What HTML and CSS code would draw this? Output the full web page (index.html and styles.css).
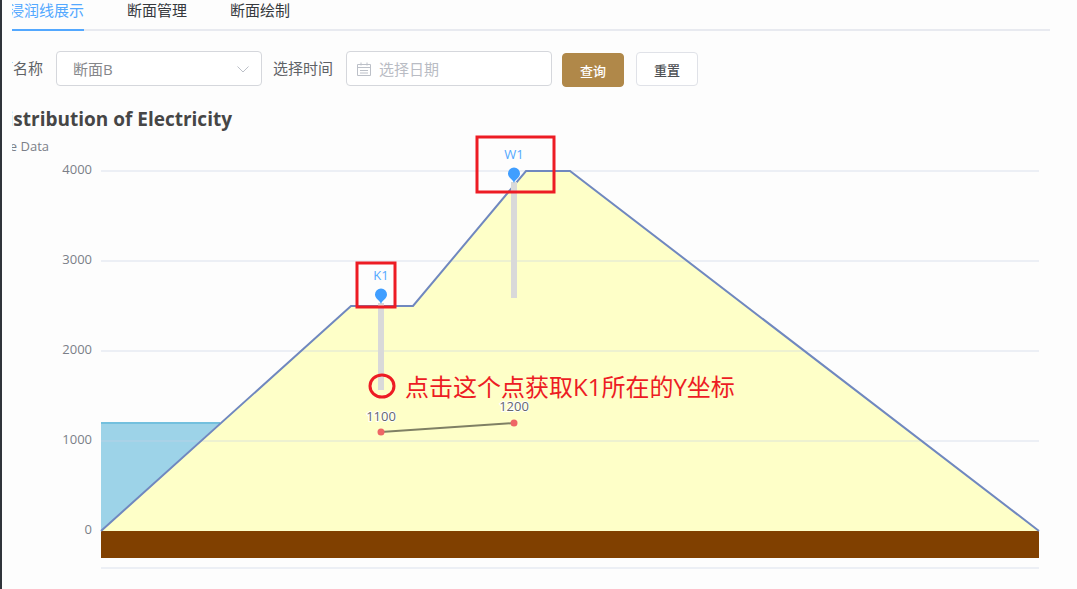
FILE: index.html
```html
<!DOCTYPE html>
<html lang="zh-CN">
<head>
<meta charset="utf-8">
<title>浸润线展示</title>
<link rel="stylesheet" href="styles.css">
</head>
<body>
<main class="page">
  <nav class="tabs">
    <a class="tab tab-active" href="#show">浸润线展示</a>
    <a class="tab" href="#manage">断面管理</a>
    <a class="tab" href="#draw">断面绘制</a>
  </nav>
  <form class="filters">
    <label class="label" for="section">断面名称</label>
    <div class="field">
      <select class="control" id="section"><option>断面B</option></select>
      <svg class="arrow" viewBox="0 0 14 14" aria-hidden="true"><path d="M1.500 4.500 7 10l5.500-5.500"/></svg>
    </div>
    <label class="label label-date" for="date">选择时间</label>
    <div class="field">
      <input class="control control-date" id="date" type="text" placeholder="选择日期">
      <svg class="calendar" viewBox="0 0 14 14" aria-hidden="true"><path d="M.5 2.500h13v11H.5zM.5 5.500h13M4 .5v3M10 .5v3M3 8.500h8M3 11h8"/></svg>
    </div>
    <button class="button button-primary" type="button">查询</button>
    <button class="button" type="button">重置</button>
  </form>
  <svg class="chart" viewBox="12 98 1038 482" role="img" aria-label="Distribution of Electricity">
    <text class="title" x="232" y="126">Distribution of Electricity</text>
    <text class="subtitle" x="49" y="151">Fake Data</text>
    <g class="axis">
      <text x="92" y="174">4000</text>
      <text x="92" y="264">3000</text>
      <text x="92" y="354">2000</text>
      <text x="92" y="444">1000</text>
      <text x="92" y="534">0</text>
    </g>
    <path class="water" d="M101 423H220L101 531z"/>
    <path class="water-line" d="M101 423H220"/>
    <path class="dam" d="M101 531 351 306H413L526 171H570L1039 531z"/>
    <path class="grid" d="M101 171H1039M101 261H1039M101 351H1039M101 441H1039M101 568H1039"/>
    <rect class="ground" x="101" y="531" width="938" height="27"/>
    <path class="dam-line" d="M101 531 351 306H413L526 171H570L1039 531"/>
    <path class="tube" d="M381 303V390M514 182V298"/>
    <path class="pin" d="M381 304c-1-4-6-5-6-9.500a6 6 0 0 1 12 0c0 4.500-5 5.500-6 9.500zM514 183c-1-4-6-5-6-9.500a6 6 0 0 1 12 0c0 4.500-5 5.500-6 9.500z"/>
    <text class="pin-name" x="381" y="280">K1</text>
    <text class="pin-name" x="514" y="159">W1</text>
    <path class="level" d="M381 432 514 423"/>
    <circle class="dot" cx="381" cy="432" r="3.500"/>
    <circle class="dot" cx="514" cy="423" r="3.500"/>
    <text class="value" x="381" y="421">1100</text>
    <text class="value" x="514" y="411">1200</text>
    <g class="mark">
      <rect x="357" y="263" width="38" height="44"/>
      <rect x="477" y="137" width="77" height="55"/>
      <ellipse cx="382" cy="386" rx="12" ry="11"/>
    </g>
    <text class="note" x="405" y="396">点击这个点获取K1所在的Y坐标</text>
  </svg>
</main>
</body>
</html>
```
FILE: styles.css
```css
* {
  box-sizing: border-box;
}

body {
  margin: 0;
  min-height: 100vh;
  border-left: 2px solid #30343b;
  background: #fdfdfd;
  color: #5f6266;
  font-family: "Open Sans", "Noto Sans CJK SC", sans-serif;
  font-size: 15px;
}

.page {
  margin: 0 27px 0 10px;
  overflow: hidden;
}

.tabs {
  display: flex;
  gap: 43px;
  height: 31px;
  border-bottom: 2px solid #e8eaf0;
}

.tab {
  height: 31px;
  line-height: 21px;
  color: #36393d;
  text-decoration: none;
  white-space: nowrap;
}

.tab-active {
  margin-left: -3px;
  border-bottom: 2px solid #53a8ff;
  color: #53a8ff;
}

.filters {
  display: flex;
  align-items: flex-start;
  height: 67px;
  padding-top: 20px;
}

.label {
  margin: 0 13px 0 -29px;
  line-height: 34px;
  white-space: nowrap;
}

.label-date {
  margin-left: 11px;
}

.field {
  position: relative;
  width: 206px;
  height: 35px;
}

.control {
  display: block;
  width: 100%;
  height: 100%;
  padding: 0 16px;
  border: 1px solid #d5d7dc;
  border-radius: 4px;
  outline: 0;
  background: #fff;
  color: #85878b;
  font: inherit;
  appearance: none;
}

.control-date {
  padding-left: 32px;
}

.control::placeholder {
  color: #b9bcc4;
}

.arrow,
.calendar {
  position: absolute;
  top: 11px;
  width: 14px;
  height: 14px;
  fill: none;
  stroke: #bcc0c8;
}

.arrow {
  right: 12px;
}

.calendar {
  left: 11px;
}

.button {
  width: 62px;
  height: 34px;
  margin: 1px 0 0 12px;
  padding: 0;
  border: 1px solid #e0e2e8;
  border-radius: 4px;
  background: #fff;
  color: #4e5155;
  font: 500 13px "Open Sans", "Noto Sans CJK SC", sans-serif;
}

.button-primary {
  margin: 2px 0 0 10px;
  border-color: #b08849;
  background: #b08849;
  color: #fff;
}

.chart {
  display: block;
  width: 100%;
  height: auto;
  overflow: hidden;
}

.title {
  fill: #464646;
  font-size: 19px;
  font-weight: 700;
  text-anchor: end;
}

.subtitle,
.axis {
  fill: #7b7f88;
  font-size: 13px;
  text-anchor: end;
}

.grid {
  stroke: #c8d2e4;
  stroke-opacity: 0.3;
  stroke-width: 2px;
}

.water {
  fill: #9dd3e8;
}

.water-line {
  stroke: #73c0de;
  stroke-width: 2px;
}

.dam {
  fill: #feffc8;
}

.ground {
  fill: #804000;
}

.dam-line {
  fill: none;
  stroke: #7088bf;
  stroke-width: 2px;
}

.tube {
  stroke: #d9d9d9;
  stroke-width: 6px;
}

.pin {
  fill: #409eff;
}

.pin-name {
  fill: #53a8ff;
  font-size: 13px;
  font-weight: 500;
  text-anchor: middle;
}

.level {
  stroke: #7f8064;
  stroke-width: 2px;
}

.dot {
  fill: #ee6666;
}

.value {
  fill: #64676e;
  stroke: #fff;
  stroke-width: 2px;
  paint-order: stroke;
  font-size: 13px;
  text-anchor: middle;
}

.mark {
  fill: none;
  stroke: #ed1c24;
  stroke-width: 3px;
}

.note {
  fill: #ed1c24;
  font-size: 24px;
}
```
